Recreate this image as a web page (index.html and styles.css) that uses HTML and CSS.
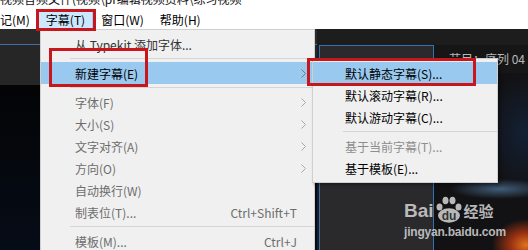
FILE: index.html
```html
<!DOCTYPE html>
<html lang="zh-CN">
<head>
    <meta charset="UTF-8">
    <meta name="viewport" content="width=device-width, initial-scale=1.0">
    <title>字幕菜单</title>
    <link rel="stylesheet" href="styles.css">
</head>
<body>
    <div class="titlebar"><span>视频音频文件(视频\pr编辑视频资料\练习视频</span></div>

    <div class="menubar">
        <span class="menubar-item first">记(M)</span>
        <span class="menubar-item active">字幕(T)</span>
        <span class="menubar-item">窗口(W)</span>
        <span class="menubar-item">帮助(H)</span>
    </div>

    <div class="workspace">
        <div class="source-panel">
            <div class="source-head"></div>
            <div class="source-bar"></div>
            <div class="source-view"></div>
        </div>
        <div class="right-area">
            <div class="title-panel"></div>
            <div class="program-panel">
                <div class="program-head">节目：序列 04</div>
                <div class="program-view"></div>
            </div>
        </div>
    </div>

    <div class="menu main-menu">
        <div class="item on">从 Typekit 添加字体...</div>
        <div class="sep"></div>
        <div class="item hover">
            新建字幕(E)
            <svg class="arrow" width="5" height="9" viewBox="0 0 5 9"><polyline points="0.5,0.5 4.5,4.5 0.5,8.5" fill="none" stroke="#7a7a7a" stroke-width="1"/></svg>

            <div class="menu sub-menu">
                <div class="item hover">默认静态字幕(S)...</div>
                <div class="item">默认滚动字幕(R)...</div>
                <div class="item">默认游动字幕(C)...</div>
                <div class="sep"></div>
                <div class="item off">基于当前字幕(T)...</div>
                <div class="item">基于模板(E)...</div>
            </div>
        </div>
        <div class="sep"></div>
        <div class="item">字体(F)<svg class="arrow" width="5" height="9" viewBox="0 0 5 9"><polyline points="0.5,0.5 4.5,4.5 0.5,8.5" fill="none" stroke="#a8a8a8" stroke-width="1"/></svg></div>
        <div class="item">大小(S)<svg class="arrow" width="5" height="9" viewBox="0 0 5 9"><polyline points="0.5,0.5 4.5,4.5 0.5,8.5" fill="none" stroke="#a8a8a8" stroke-width="1"/></svg></div>
        <div class="item">文字对齐(A)<svg class="arrow" width="5" height="9" viewBox="0 0 5 9"><polyline points="0.5,0.5 4.5,4.5 0.5,8.5" fill="none" stroke="#a8a8a8" stroke-width="1"/></svg></div>
        <div class="item">方向(O)<svg class="arrow" width="5" height="9" viewBox="0 0 5 9"><polyline points="0.5,0.5 4.5,4.5 0.5,8.5" fill="none" stroke="#a8a8a8" stroke-width="1"/></svg></div>
        <div class="item">自动换行(W)</div>
        <div class="item">制表位(T)...<span class="key">Ctrl+Shift+T</span></div>
        <div class="sep"></div>
        <div class="item">模板(M)...<span class="key">Ctrl+J</span></div>
    </div>

    <!-- red annotation boxes -->
    <div class="mark mark-bar"></div>
    <div class="mark mark-main"></div>
    <div class="mark mark-sub"></div>

    <div class="watermark">
        <div class="wm-logo">
            <span class="wm-bai">Bai</span>
            <svg class="wm-paw" width="28" height="27" viewBox="0 0 28 27">
                <ellipse cx="4.5" cy="11" rx="3" ry="3.6" fill="#d6d6d6"/>
                <ellipse cx="10.5" cy="4.5" rx="3" ry="3.8" fill="#d6d6d6"/>
                <ellipse cx="17.5" cy="4.5" rx="3" ry="3.8" fill="#d6d6d6"/>
                <ellipse cx="23.5" cy="11" rx="3" ry="3.6" fill="#d6d6d6"/>
                <ellipse cx="14" cy="19.5" rx="11" ry="7.2" fill="#d6d6d6"/>
                <text x="14" y="24" text-anchor="middle" font-family="Liberation Sans, Arial, sans-serif" font-weight="bold" font-size="12" fill="#3a3a3c">du</text>
            </svg>
            <span class="wm-jy">经验</span>
        </div>
        <div class="wm-url">jingyan.baidu.com</div>
    </div>
</body>
</html>
```

FILE: styles.css
```css
* {
    box-sizing: border-box;
}

body {
    margin: 0;
    width: 528px;
    height: 250px;
    overflow: hidden;
    position: relative;
    background-color: #fff;
    font-family: "Microsoft YaHei", "Noto Sans CJK SC", sans-serif;
    font-size: 12px;
    color: #000;
}

/* window title, only its lower edge shows */
.titlebar {
    height: 10px;
    overflow: hidden;
    white-space: nowrap;
}
.titlebar span {
    display: block;
    margin-top: -8px;
    line-height: 14px;
    color: #111;
}

.menubar {
    height: 19px;
    display: flex;
    align-items: center;
    white-space: nowrap;
}
.menubar-item {
    padding: 0 7px;
    line-height: 16px;
    border: 1px solid transparent;
}
.menubar-item.first {
    margin-left: -8px;
}
.menubar-item.active {
    background-color: #cce8ff;
    border-color: #99d1ff;
}

/* premiere panels behind the menu */
.workspace {
    height: 221px;
    display: grid;
    grid-template-columns: 317px 1fr;
}
.source-panel {
    display: flex;
    flex-direction: column;
}
.source-head {
    height: 16px;
    background-color: #2a2a2a;
    border-bottom: 1px solid #3f6fa6;
}
.source-bar {
    height: 40px;
    background-color: #262626;
}
.source-view {
    flex: 1;
    background: linear-gradient(#040406, #060c17);
}

.right-area {
    display: grid;
    grid-template-columns: 117px 1fr;
    padding-top: 16px;
    background-color: #1d1d1e;
}
.title-panel {
    margin-left: 2px;
    border: 1px solid #3470b3;
    border-bottom: 0;
    background-color: #2a292c;
}
.program-panel {
    display: flex;
    flex-direction: column;
    background-color: #161617;
}
.program-head {
    height: 28px;
    line-height: 28px;
    padding-left: 15px;
    color: #b8b8b8;
    white-space: nowrap;
}
.program-view {
    flex: 1;
    background:
        radial-gradient(ellipse 34px 26px at 92px 172px, #e0721f, #9a3212 45%, rgba(60, 15, 10, 0) 100%),
        radial-gradient(ellipse 50px 10px at 66px 116px, rgba(80, 118, 155, 0.75), rgba(30, 50, 70, 0) 100%),
        radial-gradient(ellipse 40px 60px at 90px 60px, rgba(20, 35, 60, 0.8), rgba(10, 10, 12, 0) 100%),
        #121214;
}

/* dropdown menus */
.menu {
    position: absolute;
    background-color: #f0f0f0;
    border: 1px solid #cfcfcf;
}
.main-menu {
    left: 40px;
    top: 29px;
    width: 275px;
    height: 221px;
    padding-top: 3px;
    border-bottom: 0;
}
.item {
    position: relative;
    display: flex;
    align-items: center;
    height: 22px;
    padding: 0 8px 0 34px;
    color: #6d6d6d;
    white-space: nowrap;
}
.item.on {
    color: #333;
}
.item.hover {
    background-color: #99c9ef;
    color: #000;
}
.arrow {
    margin-left: auto;
}
.key {
    margin-left: auto;
    margin-right: 9px;
}
.sep {
    height: 1px;
    margin: 3px 0 3px 29px;
    background-color: #d5d5d5;
}

.sub-menu {
    left: calc(100% - 2px);
    top: -4px;
    width: 186px;
    padding: 3px 0;
    box-shadow: 2px 2px 3px rgba(0, 0, 0, 0.35);
}
.sub-menu .item {
    padding-left: 32px;
    color: #000;
}
.sub-menu .item.off {
    color: #8d8d8d;
}
.sub-menu .sep {
    margin-left: 30px;
}

/* red boxes drawn over the screenshot */
.mark {
    position: absolute;
    border: 3px solid #c8161d;
}
.mark-bar {
    left: 36px;
    top: 9px;
    width: 60px;
    height: 22px;
}
.mark-main {
    left: 49px;
    top: 48px;
    width: 99px;
    height: 39px;
}
.mark-sub {
    left: 307px;
    top: 58px;
    width: 169px;
    height: 28px;
}

.watermark {
    position: absolute;
    left: 404px;
    top: 196px;
    color: #d4d4d4;
    opacity: 0.85;
    font-family: "Liberation Sans", Arial, sans-serif;
}
.wm-logo {
    display: flex;
    align-items: flex-end;
    gap: 1px;
}
.wm-bai {
    font-size: 19px;
    font-weight: bold;
    line-height: 19px;
    margin-bottom: 3px;
}
.wm-jy {
    font-family: "Noto Sans CJK SC", sans-serif;
    font-size: 15px;
    font-weight: bold;
    line-height: 17px;
    margin-bottom: 4px;
}
.wm-url {
    font-size: 12px;
    font-weight: bold;
    margin-top: 2px;
    letter-spacing: -0.2px;
}
```
